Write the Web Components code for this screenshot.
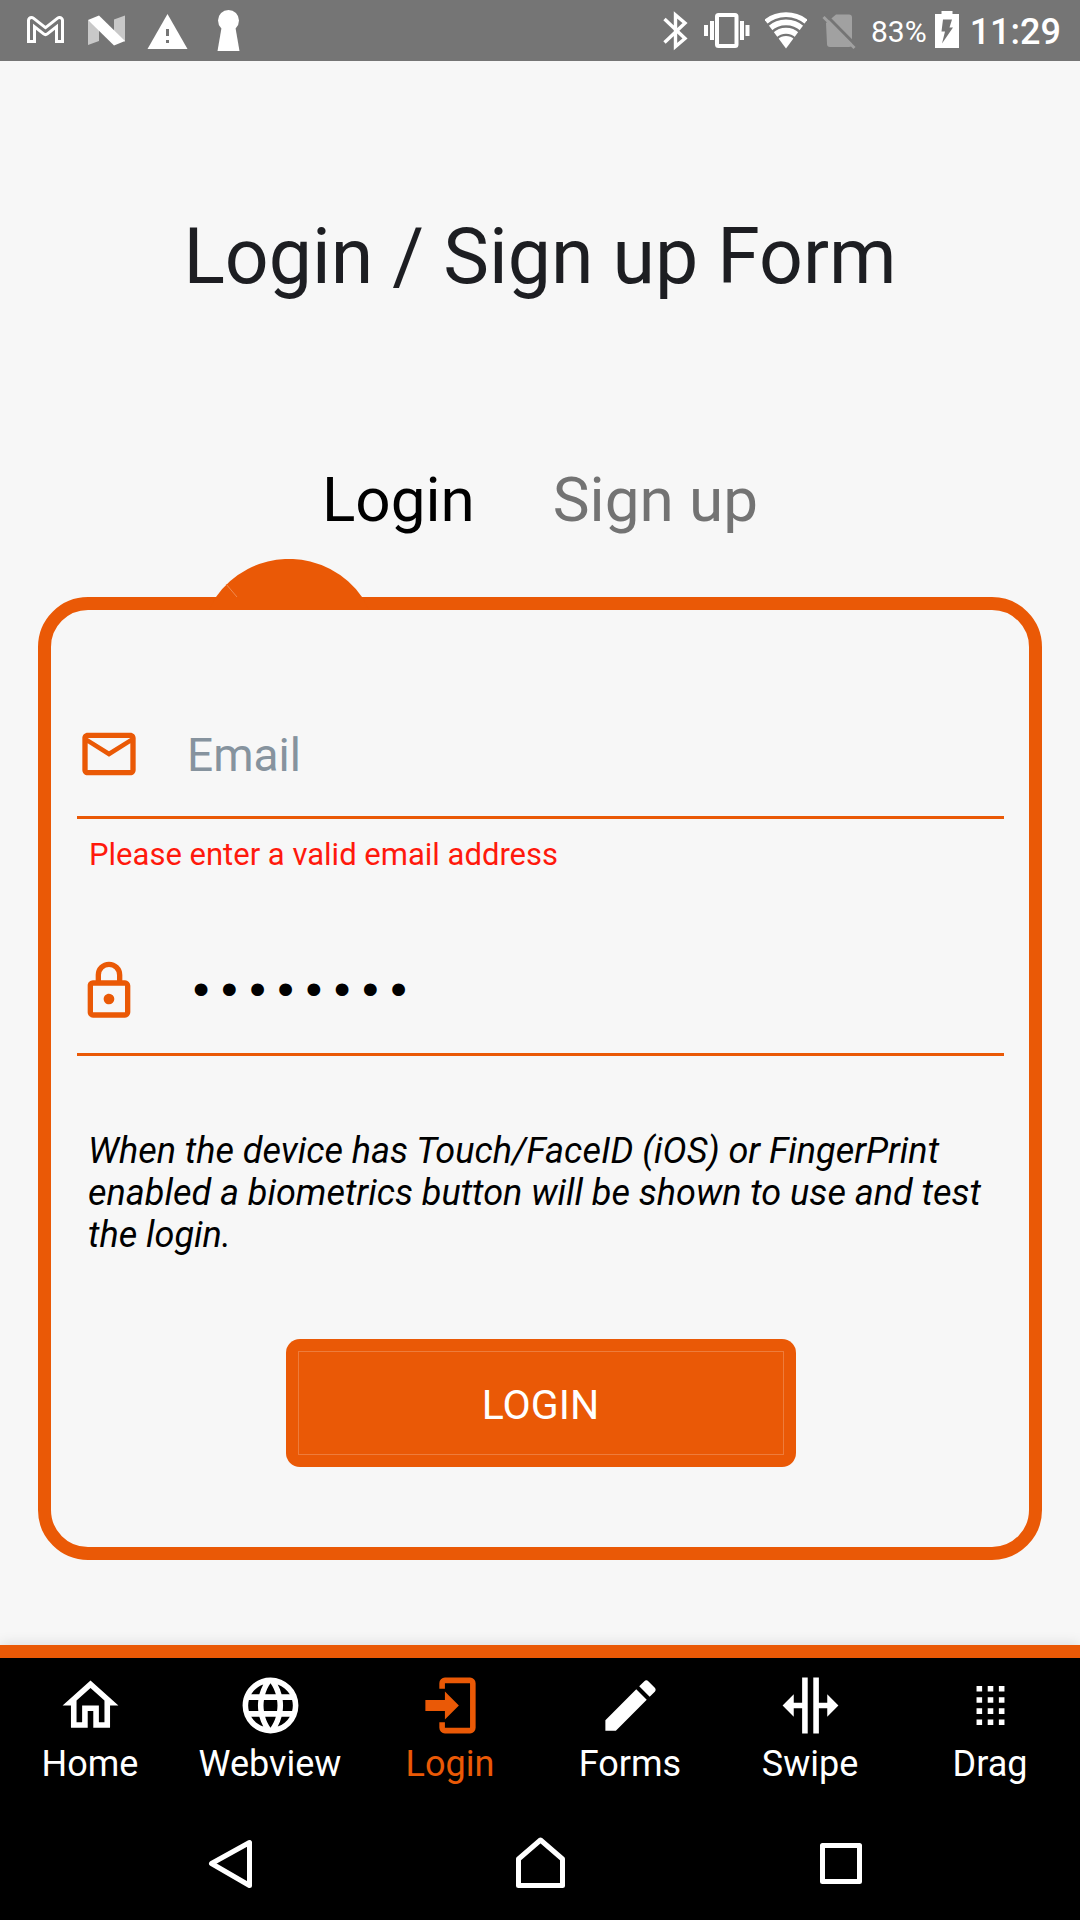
<!DOCTYPE html>
<html lang="en">
<head>
<meta charset="utf-8">
<meta name="viewport" content="width=device-width, initial-scale=1">
<title>Login / Sign up Form</title>
<style>
  :root { --accent: #ea5906; --page: #f7f7f7; }
  body { margin: 0; background: var(--page); font-family: Roboto, "Noto Sans", sans-serif; }
</style>
</head>
<body>
<login-app></login-app>
<script>
const base = `*, *::before, *::after { box-sizing: border-box; }
  button { font: inherit; border: 0; background: none; padding: 0; margin: 0; cursor: pointer; }
  svg { display: block; }`;

function define(name, css, html) {
  const template = document.createElement('template');
  template.innerHTML = `<style>${base}${css}</style>${html}`;
  customElements.define(name, class extends HTMLElement {
    constructor() {
      super();
      this.attachShadow({ mode: 'open' }).append(template.content.cloneNode(true));
    }
  });
}

const ICONS = {
  email: 'M22 6C22 4.9 21.1 4 20 4H4C2.9 4 2 4.9 2 6V18C2 19.1 2.9 20 4 20H20C21.1 20 22 19.1 22 18V6M20 6L12 11L4 6H20M20 18H4V8L12 13L20 8V18Z',
  lock: 'M12,17C10.89,17 10,16.1 10,15C10,13.89 10.89,13 12,13A2,2 0 0,1 14,15A2,2 0 0,1 12,17M18,20V10H6V20H18M18,8A2,2 0 0,1 20,10V20A2,2 0 0,1 18,22H6C4.89,22 4,21.1 4,20V10C4,8.89 4.89,8 6,8H7V6A5,5 0 0,1 12,1A5,5 0 0,1 17,6V8H18M12,3A3,3 0 0,0 9,6V8H15V6A3,3 0 0,0 12,3Z',
  home: 'M12 5.69L17 10.19V18H15V12H9V18H7V10.19L12 5.69M12 3L2 12H5V20H11V14H13V20H19V12H22',
  web: 'M16.36,14C16.44,13.34 16.5,12.68 16.5,12C16.5,11.32 16.44,10.66 16.36,10H19.74C19.9,10.64 20,11.31 20,12C20,12.69 19.9,13.36 19.74,14M14.59,19.56C15.19,18.45 15.65,17.25 15.97,16H18.92C17.96,17.65 16.43,18.93 14.59,19.56M14.34,14H9.66C9.56,13.34 9.5,12.68 9.5,12C9.5,11.32 9.56,10.65 9.66,10H14.34C14.43,10.65 14.5,11.32 14.5,12C14.5,12.68 14.43,13.34 14.34,14M12,19.96C11.17,18.76 10.5,17.43 10.09,16H13.91C13.5,17.43 12.83,18.76 12,19.96M8,8H5.08C6.03,6.34 7.57,5.06 9.4,4.44C8.8,5.55 8.35,6.75 8,8M5.08,16H8C8.35,17.25 8.8,18.45 9.4,19.56C7.57,18.93 6.03,17.65 5.08,16M4.26,14C4.1,13.36 4,12.69 4,12C4,11.31 4.1,10.64 4.26,10H7.64C7.56,10.66 7.5,11.32 7.5,12C7.5,12.68 7.56,13.34 7.64,14M12,4.03C12.83,5.23 13.5,6.57 13.91,8H10.09C10.5,6.57 11.17,5.23 12,4.03M18.92,8H15.97C15.65,6.75 15.19,5.55 14.59,4.44C16.43,5.07 17.96,6.34 18.92,8M12,2C6.47,2 2,6.5 2,12A10,10 0 0,0 12,22A10,10 0 0,0 22,12A10,10 0 0,0 12,2Z',
  login: 'M10,17V14H3V10H10V7L15,12L10,17M10,2H19A2,2 0 0,1 21,4V20A2,2 0 0,1 19,22H10A2,2 0 0,1 8,20V18H10V20H19V4H10V6H8V4A2,2 0 0,1 10,2Z',
  pencil: 'M20.71,7.04C21.1,6.65 21.1,6 20.71,5.63L18.37,3.29C18,2.9 17.35,2.9 16.96,3.29L15.12,5.12L18.87,8.87M3,17.25V21H6.75L17.81,9.93L14.06,6.18L3,17.25Z',
  swipe: 'M18,16V13H15V22H13V2H15V11H18V8L22,12L18,16M2,12L6,16V13H9V22H11V2H9V11H6V8L2,12Z',
  drag: 'M7,19V17H9V19H7M11,19V17H13V19H11M15,19V17H17V19H15M7,15V13H9V15H7M11,15V13H13V15H11M15,15V13H17V15H15M7,11V9H9V11H7M11,11V9H13V11H11M15,11V9H17V11H15M7,7V5H9V7H7M11,7V5H13V7H11M15,7V5H17V7H15Z'
};

/* <app-icon name="home"> fills its box and takes the current text colour */
customElements.define('app-icon', class extends HTMLElement {
  constructor() {
    super();
    this.attachShadow({ mode: 'open' });
  }
  connectedCallback() {
    this.shadowRoot.innerHTML = `<style>:host{display:block;flex:none;width:64px;height:64px}svg{display:block;width:100%;height:100%}</style>
      <svg viewBox="0 0 24 24" fill="currentColor" aria-hidden="true"><path d="${ICONS[this.getAttribute('name')]}"/></svg>`;
  }
});

define('status-bar', `
  :host { display: flex; justify-content: space-between; align-items: center; height: 61px;
    padding: 0 19px 0 25px; background: #757575; color: #fff; }
  .left { display: flex; gap: 20px; }
  .right { display: flex; align-items: center; gap: 15px; }
  .power { display: flex; align-items: center; gap: 8px; font-size: 30px; line-height: 36px; }
  .power span, time { padding-top: 2px; }
  time { font-size: 36px; font-weight: 500; line-height: 42px; }
  .end { display: flex; align-items: center; gap: 11px; }
`, `
  <div class="left">
    <svg width="41" height="61" viewBox="0 0 41 61"><g fill="none" stroke-linejoin="round"><path d="M6.500 43V20.500L20.500 31.500 34.500 20.500V43" stroke="#fff" stroke-width="9"/><path d="M6.500 40V20.500L20.500 31.500 34.500 20.500V40" stroke="#757575" stroke-width="3"/></g></svg>
    <svg width="41" height="61" viewBox="0 0 41 61"><path d="M2 20 13 28V41L2 45Z" fill="#c8c8c8"/><path d="M28 19.500 39 15.500V42L28 31Z" fill="#c8c8c8"/><path d="M2 20 13 15.500 39 41 28 45.500Z" fill="#fff"/></svg>
    <svg width="41" height="61" viewBox="0 0 41 61"><path d="M20.500 14 40.500 49H.5Z" fill="#fff"/><path d="M19 29h3v7h-3zM19 40h3v3h-3z" fill="#757575"/></svg>
    <svg width="41" height="61" viewBox="0 0 41 61"><circle cx="20.500" cy="20.500" r="10.500" fill="#fff"/><path d="M14 25H27L31.500 51H9.500Z" fill="#fff"/></svg>
  </div>
  <div class="right">
    <svg width="26" height="61" viewBox="0 0 26 61"><path d="M1.500 19 22 38.500 12.500 46.500V15L22 23 1.500 42.500" fill="none" stroke="#fff" stroke-width="3.400"/></svg>
    <svg width="46" height="61" viewBox="0 0 46 61"><rect x="13" y="15" width="19.500" height="31" rx="1.500" fill="none" stroke="#fff" stroke-width="4"/><path d="M0 25h4v11H0zM6 21h4v19H6zM36 21h4v19h-4zM41.500 25h4v11h-4z" fill="#fff"/></svg>
    <svg width="42" height="61" viewBox="0 0 42 61"><path d="M21 48.500-.5 19.500A36 36 0 0 1 42.500 19.500Z" fill="#fff"/><path d="M2 25.500A28.500 28.500 0 0 1 40 25.500M7 32A20.500 20.500 0 0 1 35 32M12 38.500A13 13 0 0 1 30 38.500" fill="none" stroke="#757575" stroke-width="2.400"/></svg>
    <svg width="34" height="61" viewBox="0 0 34 61"><path d="M4 23 14 14.500H27Q30 14.500 30 17.500V44Q30 47 27 47H8Q5 47 5 44Z" fill="#a1a1a1"/><path d="M3 14 34 45.500" stroke="#757575" stroke-width="3"/><path d="M1.500 17 32.500 48" stroke="#a1a1a1" stroke-width="3"/></svg>
    <div class="end">
      <div class="power"><span>83%</span>
        <svg width="24" height="61" viewBox="0 0 24 61"><path d="M0 14H6.500V11H17.500V14H24V48H0Z" fill="#fff"/><path d="M8 19.500H17L14.500 27.500H18L7 43.500 10 31.500H6.500Z" fill="#757575"/></svg>
      </div>
      <time>11:29</time>
    </div>
  </div>
`);

define('form-tabs', `
  :host { display: block; }
  div { display: flex; justify-content: center; gap: 78px; }
  button { font-size: 62px; line-height: 74px; color: #737373; }
  button[aria-selected="true"] { color: #000; }
`, `
  <div role="tablist">
    <button role="tab" aria-selected="true">Login</button>
    <button role="tab" aria-selected="false">Sign up</button>
  </div>
`);

define('outlined-card', `
  :host { display: block; position: relative; border: 13px solid var(--accent); border-radius: 50px;
    padding: 82px 25px 80px 26px; }
  .bump { position: absolute; left: 158px; top: -51px; }
`, `
  <svg class="bump" width="160" height="51" viewBox="0 0 160 51"><path d="M0 51 7 38A89 89 0 0 1 153 38L160 51Z" fill="#ea5906"/><path d="M17 25 28 38" stroke="#f08a50" stroke-width="1"/></svg>
  <slot></slot>
`);

/* <form-field icon type label placeholder value error> */
customElements.define('form-field', class extends HTMLElement {
  constructor() {
    super();
    this.attachShadow({ mode: 'open' });
  }
  connectedCallback() {
    const a = n => this.getAttribute(n) || '';
    this.shadowRoot.innerHTML = `<style>${base}
      :host { display: block; }
      .row { display: flex; align-items: center; gap: 46px; height: 127px; border-bottom: 3px solid var(--accent); }
      label { color: var(--accent); }
      input { flex: 1; min-width: 0; height: 64px; border: 0; padding: 2px 0 0; outline: 0; background: none;
        font-family: Roboto, sans-serif; font-size: 46px; color: #000; }
      input[type="password"] { font-family: "Liberation Mono", monospace; font-size: 47px; }
      input::placeholder { color: #86939e; opacity: 1; }
      p { margin: 18px 0 0; padding-left: 12px; font-size: 31px; line-height: 36px; color: #ff190c; }
    </style>
    <div class="row">
      <label for="field" aria-label="${a('label')}"><app-icon name="${a('icon')}"></app-icon></label>
      <input id="field" type="${a('type')}" placeholder="${a('placeholder')}" value="${a('value')}">
    </div>${a('error') ? `<p>${a('error')}</p>` : ''}`;
  }
});

define('submit-button', `
  :host { display: flex; justify-content: center; }
  button { width: 510px; padding: 12px; border-radius: 14px; background: var(--accent); color: #fff;
    font-size: 41px; line-height: 48px; }
  span { display: block; padding: 29px 0 25px; border: 1px solid #ee7c3b; }
`, `<button type="submit"><span><slot></slot></span></button>`);

customElements.define('tab-link', class extends HTMLElement {
  constructor() {
    super();
    this.attachShadow({ mode: 'open' });
  }
  connectedCallback() {
    this.shadowRoot.innerHTML = `<style>${base}
      :host { display: block; flex: 1; color: #fff; }
      :host([active]) { color: var(--accent); }
      a { display: flex; flex-direction: column; align-items: center; gap: 4px; color: inherit;
        text-decoration: none; font-size: 36px; line-height: 42px; }
      app-icon { width: 67px; height: 67px; }
    </style><a href="#"><app-icon name="${this.getAttribute('icon')}"></app-icon><slot></slot></a>`;
  }
});

define('tab-bar', `
  :host { display: block; border-top: 13px solid var(--accent); background: #000;
    box-shadow: 0 -2px 12px rgba(0, 0, 0, .1); }
  nav { display: flex; padding: 14px 0 23px; }
`, `<nav><slot></slot></nav>`);

define('system-nav', `
  :host { display: flex; justify-content: center; align-items: center; gap: 243px; height: 112px; background: #000; }
  svg { fill: none; stroke: #fff; stroke-width: 5; stroke-linejoin: round; }
`, `
  <button aria-label="Back"><svg width="60" height="60" viewBox="0 0 60 60"><path d="M42.500 8.500V51.500L4.500 29.500Z"/></svg></button>
  <button aria-label="Home"><svg width="60" height="60" viewBox="0 0 60 60"><path d="M30.500 6 52.500 25V51.500H8.500V25Z"/></svg></button>
  <button aria-label="Overview"><svg width="60" height="60" viewBox="0 0 60 60"><rect x="9.500" y="11.500" width="37" height="36"/></svg></button>
`);

define('login-app', `
  :host { display: flex; flex-direction: column; min-height: 100vh; }
  main { flex: 1; padding: 150px 38px 85px; }
  h1 { margin: 0 0 160px; font-size: 77px; font-weight: 400; line-height: 92px; text-align: center; color: #1d1e22; }
  form-tabs { margin-bottom: 60px; }
  .password { margin-top: 56px; }
  .hint { margin: 74px 11px 83px; font-size: 36px; line-height: 42px; font-style: italic; color: #000; }
`, `
  <status-bar></status-bar>
  <main>
    <h1>Login / Sign up Form</h1>
    <form-tabs></form-tabs>
    <outlined-card>
      <form-field icon="email" type="email" label="Email" placeholder="Email" error="Please enter a valid email address"></form-field>
      <form-field class="password" icon="lock" type="password" label="Password" value="password"></form-field>
      <p class="hint">When the device has Touch/FaceID (iOS) or FingerPrint enabled a biometrics button will be shown to use and test the login.</p>
      <submit-button>LOGIN</submit-button>
    </outlined-card>
  </main>
  <tab-bar>
    <tab-link icon="home">Home</tab-link>
    <tab-link icon="web">Webview</tab-link>
    <tab-link icon="login" active>Login</tab-link>
    <tab-link icon="pencil">Forms</tab-link>
    <tab-link icon="swipe">Swipe</tab-link>
    <tab-link icon="drag">Drag</tab-link>
  </tab-bar>
  <system-nav></system-nav>
`);
</script>
</body>
</html>
